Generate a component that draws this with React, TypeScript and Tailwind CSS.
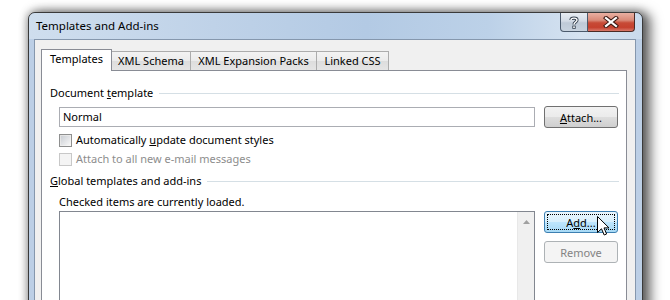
import React from "react";

function Btn({
  children,
  variant = "normal",
  className = "",
}: {
  children: React.ReactNode;
  variant?: "normal" | "focus" | "disabled";
  className?: string;
}) {
  const base =
    "h-[22px] w-[74px] rounded-[3px] border flex items-center justify-center leading-none shrink-0";
  const v =
    variant === "focus"
      ? "border-[#3c7fb1] bg-[linear-gradient(180deg,#eaf6fd_0%,#d9f0fc_48%,#bee6fd_52%,#a7d9f5_100%)] text-black p-[2px]"
      : variant === "disabled"
      ? "border-[#adb2b5] bg-[#f4f4f4] text-[#838383]"
      : "border-[#707070] bg-[linear-gradient(180deg,#f2f2f2_0%,#ebebeb_48%,#dddddd_52%,#cfcfcf_100%)] text-black";
  return (
    <div className={`${base} ${v} ${className}`}>
      {variant === "focus" ? (
        <div className="w-full h-full border border-dotted border-black flex items-center justify-center">
          {children}
        </div>
      ) : (
        children
      )}
    </div>
  );
}

function Checkbox({ disabled }: { disabled?: boolean }) {
  return (
    <div
      className={`w-[13px] h-[13px] border shrink-0 ${
        disabled
          ? "border-[#c8c8c8] bg-[#f4f4f4]"
          : "border-[#8e8f8f] bg-[linear-gradient(135deg,#e0e0e0_0%,#f8f8f8_100%)]"
      }`}
    >
      <div
        className={`m-[1px] w-[9px] h-[9px] ${
          disabled ? "bg-[#f4f4f4]" : "bg-[linear-gradient(135deg,#cbcfd5_0%,#f6f6f6_100%)]"
        }`}
      />
    </div>
  );
}

function GroupLabel({ children }: { children: React.ReactNode }) {
  return (
    <div className="flex items-center h-[16px] pl-[8px] pr-[7px] gap-[6px]">
      <span className="whitespace-nowrap">{children}</span>
      <div className="flex-1 h-px bg-[#d5dfe5]" />
    </div>
  );
}

const tabInactive =
  "-ml-px h-[19px] border border-b-0 border-[#acacac] bg-[linear-gradient(180deg,#f3f3f3_0%,#ebebeb_50%,#dddddd_51%,#e5e5e5_100%)] flex items-center justify-center";

export default function App() {
  return (
    <div className="relative w-[670px] h-[300px] bg-white overflow-hidden font-['Noto_Sans',sans-serif] text-[11px] text-black">
      <div className="ml-[28px] mt-[12px] w-[615px] h-[320px] rounded-t-[7px] border border-[#3a3a3a] bg-[#bccfe6] shadow-[0_0_8px_1px_rgba(0,0,0,0.3),6px_2px_12px_2px_rgba(0,0,0,0.55)] flex flex-col overflow-hidden">
        {/* Title bar */}
        <div className="h-[26px] flex items-start bg-[linear-gradient(90deg,#cfdeee_0%,#bfd2e8_30%,#b3cae4_55%,#bcd1e8_75%,#d6e3f1_90%,#c9daec_100%)] rounded-t-[6px]">
          <div className="flex-1 pl-[7px] h-[26px] flex items-center leading-none text-black text-[11.5px]">
            Templates and Add-ins
          </div>
          <div className="flex mr-[7px]">
            <div className="w-[28px] h-[19px] border border-t-0 border-[#4b5a6c] rounded-bl-[4px] bg-[linear-gradient(180deg,#e8edf3_0%,#d3dbe5_45%,#bfcad7_55%,#c8d3df_100%)] flex items-center justify-center">
              <svg width="10" height="13" viewBox="0 0 10 13">
                <path
                  d="M2 4 C2 1.5 8 1.5 8 4 C8 6 5 6 5 8.5"
                  fill="none"
                  stroke="#3a4654"
                  strokeWidth="3.2"
                />
                <path
                  d="M2 4 C2 1.5 8 1.5 8 4 C8 6 5 6 5 8.5"
                  fill="none"
                  stroke="#ffffff"
                  strokeWidth="1.4"
                />
                <rect x="3.3" y="9.6" width="3.4" height="3.2" fill="#3a4654" />
                <rect x="4.2" y="10.4" width="1.6" height="1.6" fill="#fff" />
              </svg>
            </div>
            <div className="w-[47px] h-[19px] border border-t-0 border-l-0 border-[#4b2a25] rounded-br-[4px] bg-[linear-gradient(180deg,#e9b0a2_0%,#d98a78_40%,#c74a36_55%,#c5412e_80%,#d8786a_100%)] flex items-center justify-center">
              <svg width="16" height="12" viewBox="0 0 16 12">
                <path d="M3 2 L13 10 M13 2 L3 10" stroke="#3d1a14" strokeWidth="4.2" strokeLinecap="square" />
                <path d="M3 2 L13 10 M13 2 L3 10" stroke="#ffffff" strokeWidth="2.2" strokeLinecap="square" />
              </svg>
            </div>
          </div>
        </div>

        {/* Client area */}
        <div className="ml-[5px] mr-[6px] flex-1 border border-b-0 border-[#8597ad] bg-[#f0f0f0] pl-[6px] pr-[8px] pt-[9px] flex flex-col">
          {/* Tabs */}
          <div className="flex items-end h-[21px]">
            <div className="relative z-10 w-[71px] h-[22px] -mb-px border border-b-0 border-[#898c95] bg-white flex items-center justify-center pb-[2px]">
              Templates
            </div>
            <div className={`${tabInactive} w-[80px]`}>XML Schema</div>
            <div className={`${tabInactive} w-[127px]`}>XML Expansion Packs</div>
            <div className={`${tabInactive} w-[73px]`}>Linked CSS</div>
          </div>

          {/* Panel */}
          <div className="flex-1 border border-b-0 border-[#898c95] bg-white pt-[14px] flex flex-col">
            <GroupLabel>
              Document <u>t</u>emplate
            </GroupLabel>

            <div className="ml-[17px] mr-[8px]">
              <div className="mt-[5px] flex items-center h-[22px] gap-[9px]">
                <div className="flex-1 h-[20px] border border-[#abadb3] bg-white flex items-center pl-[3px]">
                  Normal
                </div>
                <Btn>
                  <span>
                    <u>A</u>ttach...
                  </span>
                </Btn>
              </div>

              <div className="mt-[4px] h-[16px] flex items-center gap-[4px]">
                <Checkbox />
                <span>
                  Automatically <u>u</u>pdate document styles
                </span>
              </div>
              <div className="mt-[3px] h-[16px] flex items-center gap-[4px] text-[#8d8d8d]">
                <Checkbox disabled />
                <span>Attach to all new e-mail messages</span>
              </div>
            </div>

            <div className="mt-[6px]">
              <GroupLabel>
                <u>G</u>lobal templates and add-ins
              </GroupLabel>
            </div>

            <div className="ml-[17px] mr-[8px]">
              <div className="mt-[5px] h-[16px] flex items-center">Checked items are currently loaded.</div>
              <div className="mt-[1px] flex gap-[9px]">
                <div className="flex-1 h-[120px] border border-[#828790] bg-white flex justify-end">
                  <div className="w-[17px] h-full bg-[#f0f0f0] border-l border-[#e8e8e8] flex flex-col items-center pt-[8px]">
                    <svg width="7" height="4" viewBox="0 0 7 4">
                      <path d="M0 4 L3.5 0 L7 4 Z" fill="#a0a0a0" />
                    </svg>
                  </div>
                </div>
                <div className="flex flex-col gap-[8px]">
                  <Btn variant="focus">
                    <span>
                      A<u>d</u>d...
                    </span>
                  </Btn>
                  <Btn variant="disabled">Remove</Btn>
                </div>
              </div>
            </div>
          </div>
        </div>
      </div>

      {/* Mouse cursor */}
      <svg
        className="absolute left-[597px] top-[216px]"
        width="13"
        height="21"
        viewBox="0 0 13 21"
      >
        <path
          d="M0.5 0.5 L0.5 16.5 L4.5 12.8 L7.2 19 L9.6 18 L7 11.9 L12 11.9 Z"
          fill="#ffffff"
          stroke="#000000"
          strokeWidth="1"
          strokeLinejoin="miter"
        />
      </svg>
    </div>
  );
}
